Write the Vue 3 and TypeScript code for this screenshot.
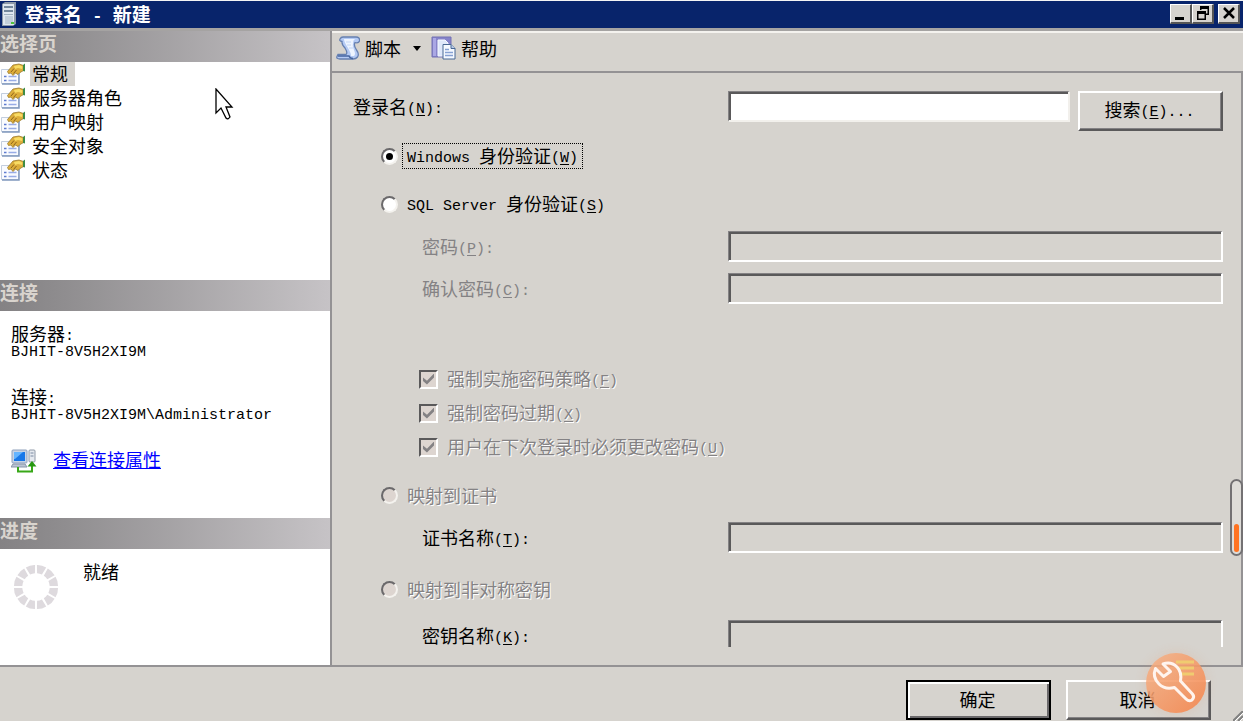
<script setup lang="ts">
import { ref } from 'vue'

interface Policy {
  id: string
  text: string
  key: string
}

const pages: string[] = ['常规', '服务器角色', '用户映射', '安全对象', '状态']
const activePage = ref<number>(0)
const auth = ref<string>('windows')
const loginName = ref<string>('')

const policies: Policy[] = [
  { id: 'policy', text: '强制实施密码策略', key: 'F' },
  { id: 'expire', text: '强制密码过期', key: 'X' },
  { id: 'change', text: '用户在下次登录时必须更改密码', key: 'U' },
]

const spinnerAngles: number[] = Array.from({ length: 12 }, (_, i) => i * 30 + 15)
</script>

<template>
  <div class="window">
    <header class="titlebar">
      <svg class="title-icon" viewBox="0 0 16 24" aria-hidden="true">
        <path d="M1 2 L4 0 H15 V22 L12 24 H1 Z" fill="#8d99a8" />
        <rect x="2" y="2" width="11" height="21" fill="#dfe7ef" />
        <rect x="3" y="4" width="9" height="2" fill="#73879c" />
        <rect x="3" y="8" width="9" height="2" fill="#73879c" />
        <rect x="3" y="12" width="9" height="1" fill="#9fb0c0" />
        <rect x="4" y="14" width="8" height="8" fill="#c2ceda" />
        <rect x="10" y="20" width="3" height="2" fill="#4fc43a" />
      </svg>
      <h1>登录名<span class="lat"> - </span>新建</h1>
      <div class="window-buttons">
        <button type="button" aria-label="最小化">
          <svg viewBox="0 0 16 16"><rect x="2" y="12" width="9" height="3" /></svg>
        </button>
        <button type="button" aria-label="还原">
          <svg viewBox="0 0 16 16">
            <path d="M5 1H14V10H11V8.500H12.500V4H6.500V5H5Z" />
            <path d="M2 6H11V15H2ZM3.500 9V13.500H9.500V9Z" fill-rule="evenodd" />
          </svg>
        </button>
        <button type="button" class="close" aria-label="关闭">
          <svg viewBox="0 0 16 16"><path d="M3 3L13 13M13 3L3 13" stroke="#000" stroke-width="2.500" /></svg>
        </button>
      </div>
    </header>

    <div class="main">
      <aside class="sidebar">
        <section class="pages">
          <h2>选择页</h2>
          <ul>
            <li v-for="(page, i) in pages" :key="page">
              <button type="button" :class="{ active: i === activePage }" @click="activePage = i">
                <svg class="page-icon" viewBox="0 0 24 22" aria-hidden="true">
                  <path d="M0.500 6.500H17.500V20.500H0.500Z" fill="#f9fbff" stroke="#c3cede" />
                  <path d="M18 9V21H1" fill="none" stroke="#8098bd" stroke-width="1.500" />
                  <path d="M3 13.500H5.500M3 17.500H5.500" stroke="#5f7cd0" stroke-width="1.600" />
                  <path d="M7.500 13.500H15.500M7.500 17.500H15.500" stroke="#98ace6" stroke-width="1.600" />
                  <path d="M6.500 8.500L12 2L18 1L22.500 2.500V7.500L19 9.500L17 11.500L14.500 10L12 12.500L10 10L7.500 10.500Z" fill="#ddae3a" stroke="#9b7b2c" stroke-width="0.800" />
                  <path d="M13 3L18 2L21.500 3.500L21 6L17 5L14 6Z" fill="#f8dc64" />
                  <path d="M10 9L13 5.500M12.500 10.500L15.500 7" stroke="#8f641c" />
                  <path d="M22 2L24 0.500V8.500L22 8Z" fill="#3f8c46" />
                </svg>
                <span>{{ page }}</span>
              </button>
            </li>
          </ul>
        </section>

        <section class="connection">
          <h2>连接</h2>
          <div class="connection-body">
            <dl>
              <dt>服务器<span class="lat">:</span></dt>
              <dd class="lat">BJHIT-8V5H2XI9M</dd>
              <dt>连接<span class="lat">:</span></dt>
              <dd class="lat">BJHIT-8V5H2XI9M\Administrator</dd>
            </dl>
            <div class="link-row">
              <svg viewBox="0 0 26 24" aria-hidden="true">
                <rect x="1" y="1" width="15" height="13" rx="1" fill="#c7d2e4" stroke="#8fa0bb" />
                <rect x="3" y="3" width="11" height="9" fill="#1877e8" />
                <path d="M3 3H12L4 10H3Z" fill="#64b4ff" />
                <path d="M2 15H14L16 18H0Z" fill="#bcc5d3" stroke="#8895aa" />
                <rect x="18" y="1" width="6" height="12" rx="1" fill="#e5e9ef" stroke="#909aa8" />
                <path d="M19.500 4H22.500M19.500 7H22.500" stroke="#7888a0" />
                <path d="M7 18V22.500H21V17" fill="none" stroke="#38a818" stroke-width="2" />
                <path d="M16.500 17.500L21 12L25.500 17.500Z" fill="#279812" />
              </svg>
              <a href="#">查看连接属性</a>
            </div>
          </div>
        </section>

        <section class="progress">
          <h2>进度</h2>
          <div class="progress-body">
            <svg viewBox="0 0 46 46" aria-hidden="true">
              <path
                v-for="a in spinnerAngles"
                :key="a"
                d="M18.200 1.500Q23 0 27.800 1.500L25.500 9.500Q23 9 20.500 9.500Z"
                fill="#dedade"
                :transform="`rotate(${a} 23 23)`"
              />
            </svg>
            <span>就绪</span>
          </div>
        </section>
      </aside>

      <div class="content">
        <nav class="toolbar">
          <button type="button">
            <svg class="script-icon" viewBox="0 0 24 24" aria-hidden="true">
              <path d="M7 1H20Q24 1 23.500 5Q22.500 7.500 19 6.500L18.500 8Q18 10 20.500 14Q23.500 18 21.500 21Q20 23 17 23H4Q0 23 1 20.500L2 18.500H10Q12 17 9 12Q5.500 8 6 5.500Q3 5 4 3Q5 1 7 1Z" fill="#b4caf4" stroke="#6680b0" stroke-width="1.300" />
              <path d="M8 3H19Q17 4 17 7Q16 10 18 14Q20 18 18 20H15Q15 17 12 12Q8 6 8 3Z" fill="#edf4ff" />
              <path d="M2 20H13Q14 22.500 17 22.500" fill="none" stroke="#4565a0" stroke-width="1.500" />
              <path d="M10 6H15M11 9H15M13 12H17" stroke="#c4d6f4" />
            </svg>
            <span>脚本</span>
            <svg class="arrow" viewBox="0 0 8 5" aria-hidden="true"><path d="M0 0H8L4 5Z" /></svg>
          </button>
          <button type="button">
            <svg class="help-icon" viewBox="0 0 25 24" aria-hidden="true">
              <path d="M1 1H20V21H1Z" fill="#8684ca" stroke="#7270b4" />
              <path d="M2 2H5V20H2Z" fill="#aaa7e4" />
              <path d="M7 4H14L17 7V20H7Z" fill="#dfe8fa" stroke="#f6f9ff" />
              <path d="M12 8.500H20L24 12.500V23H12Z" fill="#f5f9ff" stroke="#496894" />
              <path d="M20 8.500V12.500H24" fill="#b9cae8" stroke="#496894" />
              <path d="M14 13.500H18M14 16.500H22M14 19.500H22" stroke="#86a1d2" stroke-width="1.500" />
            </svg>
            <span>帮助</span>
          </button>
        </nav>

        <form class="form" @submit.prevent>
          <div class="fields">
            <div class="row login">
              <label for="login">登录名<span class="lat">(<u>N</u>):</span></label>
              <div class="login-controls">
                <input id="login" v-model="loginName" type="text" class="box" />
                <button type="button" class="btn">搜索<span class="lat">(<u>E</u>)...</span></button>
              </div>
            </div>

            <label class="option windows">
              <input v-model="auth" type="radio" name="auth" value="windows" />
              <span class="focus"><span class="lat">Windows </span>身份验证<span class="lat">(<u>W</u>)</span></span>
            </label>
            <label class="option sql">
              <input v-model="auth" type="radio" name="auth" value="sql" />
              <span><span class="lat">SQL Server </span>身份验证<span class="lat">(<u>S</u>)</span></span>
            </label>

            <div class="row sub password muted">
              <label for="pwd">密码<span class="lat">(<u>P</u>):</span></label>
              <input id="pwd" type="password" class="box" disabled />
            </div>
            <div class="row sub confirm muted">
              <label for="pwd2">确认密码<span class="lat">(<u>C</u>):</span></label>
              <input id="pwd2" type="password" class="box" disabled />
            </div>

            <div class="policies">
              <label v-for="p in policies" :key="p.id" class="option etched">
                <input type="checkbox" checked disabled />
                <span>{{ p.text }}<span class="lat">(<u>{{ p.key }}</u>)</span></span>
              </label>
            </div>

            <label class="option etched cert">
              <input type="radio" name="auth" value="cert" disabled />
              <span>映射到证书</span>
            </label>
            <div class="row sub cert-name">
              <label for="cert">证书名称<span class="lat">(<u>T</u>):</span></label>
              <input id="cert" type="text" class="box" disabled />
            </div>
            <label class="option etched asym">
              <input type="radio" name="auth" value="key" disabled />
              <span>映射到非对称密钥</span>
            </label>
            <div class="row sub key-name">
              <label for="key">密钥名称<span class="lat">(<u>K</u>):</span></label>
              <input id="key" type="text" class="box" disabled />
            </div>
          </div>
        </form>
      </div>
    </div>

    <footer class="footer">
      <button type="button" class="btn default">确定</button>
      <button type="button" class="btn">取消</button>
      <svg class="grip" viewBox="0 0 10 10" aria-hidden="true">
        <path d="M0 10L10 0M5 10L10 5" stroke="#808080" stroke-width="2" />
        <path d="M2 10L10 2M7 10L10 7" stroke="#fff" />
      </svg>
    </footer>

    <div class="level" aria-hidden="true"><span></span></div>

    <button type="button" class="tool-badge" aria-label="工具">
      <svg viewBox="0 0 60 60" aria-hidden="true">
        <path d="M30 9H48M32 15H48M34 21H48" stroke="#f0cb70" stroke-width="3" />
        <path
          d="M17 11Q25 8 31 14Q36 19 34.500 28L46.500 41Q49 44 46 47Q43 49 40 46L28.500 34.500Q19 37 13 31Q6 24 9.500 15.500L17.500 23.500L24.500 18.500Z"
          fill="none"
          stroke="#fff4ee"
          stroke-width="3"
          stroke-linejoin="round"
        />
      </svg>
    </button>

    <svg class="pointer" viewBox="0 0 19 32" aria-hidden="true">
      <path d="M1 1V25L6 20L11 30Q13 32 15 29L11 19H17Z" fill="#fff" stroke="#000" stroke-width="1.300" />
    </svg>
  </div>
</template>

<style>
body {
  margin: 0;
  background: #d6d3ce;
}
</style>

<style scoped>
* {
  box-sizing: border-box;
}

.window {
  position: relative;
  display: flex;
  flex-direction: column;
  height: 100vh;
  overflow: hidden;
  border-top: 1px solid #f4f4f4;
  background: #d6d3ce;
  color: #000;
  font: 18px/24px "Noto Sans CJK SC", sans-serif;
}

button,
input {
  margin: 0;
  padding: 0;
  border: 0;
  border-radius: 0;
  background: none;
  color: inherit;
  font: inherit;
}

svg {
  flex: none;
}

.lat {
  font-family: "Liberation Mono", monospace;
  font-size: 15px;
  line-height: 18px;
  vertical-align: 1px;
  white-space: pre;
}

u {
  text-underline-offset: 2px;
}

.titlebar {
  display: flex;
  flex: none;
  align-items: center;
  height: 30px;
  padding: 0 3px 2px 1px;
  border-bottom: 3px solid #a5a3a2;
  background: #08246b;
  color: #fff;
}

.title-icon {
  width: 16px;
  height: 24px;
}

.titlebar h1 {
  flex: 1;
  margin: 0 0 0 8px;
  font-size: 19px;
  line-height: 24px;
}

.titlebar .lat {
  font-size: 17px;
}

.window-buttons {
  display: flex;
}

.window-buttons button {
  width: 22px;
  height: 20px;
  border: solid;
  border-width: 1px 2px 2px 1px;
  border-color: #fff #555 #555 #fff;
  background: #d6d3ce;
}

.window-buttons svg {
  display: block;
  width: 16px;
  height: 16px;
  margin: 0 auto;
}

.window-buttons .close {
  margin-left: 4px;
}

.main {
  display: flex;
  flex: 1;
  min-height: 0;
  border-bottom: 2px solid #949294;
}

.sidebar {
  display: flex;
  flex: none;
  flex-direction: column;
  width: 332px;
  border-right: 2px solid #949294;
  background: #fff;
}

.sidebar h2 {
  height: 31px;
  margin: 0;
  background: linear-gradient(90deg, #848284 0%, #8d8b8d 16%, #c6c3c6 100%);
  color: #d9d4ce;
  font-size: 19px;
  line-height: 24px;
}

.pages {
  flex: none;
  height: 249px;
}

.pages ul {
  margin: 0;
  padding: 0;
  list-style: none;
}

.pages li button {
  display: flex;
  align-items: center;
  height: 24px;
  padding-left: 1px;
}

.page-icon {
  width: 24px;
  height: 22px;
  margin-right: 5px;
}

.pages li span {
  padding: 0 7px 2px 2px;
  line-height: 22px;
}

.pages .active span {
  background: #d6d3ce;
}

.connection {
  flex: none;
  height: 238px;
}

.connection-body {
  padding: 13px 11px;
}

dl,
dd {
  margin: 0;
}

dt {
  height: 18px;
  line-height: 18px;
}

dd.lat {
  height: 22px;
  line-height: 22px;
}

dd + dt {
  margin-top: 23px;
}

.link-row {
  display: flex;
  gap: 16px;
  margin-top: 20px;
}

.link-row svg {
  width: 26px;
  height: 24px;
  margin-top: 2px;
}

.link-row a {
  color: #00f;
}

.progress-body {
  display: flex;
  gap: 24px;
  padding: 10px 13px;
}

.progress-body svg {
  width: 46px;
  height: 46px;
  margin-top: 5px;
}

.content {
  display: flex;
  flex: 1;
  flex-direction: column;
  min-width: 0;
}

.toolbar {
  display: flex;
  flex: none;
  gap: 10px;
  height: 42px;
  padding: 0 4px 8px;
  border-top: 2px solid #f4f2ee;
  border-bottom: 2px solid #949294;
}

.toolbar button {
  display: flex;
  align-items: center;
  gap: 5px;
}

.script-icon {
  width: 24px;
  height: 24px;
}

.help-icon {
  width: 25px;
  height: 24px;
}

.arrow {
  width: 8px;
  height: 5px;
  margin-left: 7px;
}

.form {
  flex: 1;
  min-height: 0;
  padding: 0 18px 18px 21px;
  border-right: 2px solid #949294;
}

.fields {
  display: flex;
  flex-direction: column;
  height: 100%;
  padding-top: 18px;
  overflow: hidden;
}

.fields > * {
  flex: none;
}

.row {
  display: grid;
  grid-template-columns: 375px 1fr;
}

.row > label {
  line-height: 30px;
}

.sub > label {
  padding-left: 69px;
}

.login-controls {
  display: flex;
  align-items: flex-start;
  gap: 8px;
}

.box {
  width: 100%;
  height: 31px;
  border: solid;
  border-width: 1px 2px 2px 1px;
  border-color: #848284 #fff #fff #848284;
  box-shadow: inset 2px 2px 0 #5a595a;
  outline: 0;
}

#login {
  flex: 1;
  min-width: 0;
  padding: 0 6px;
  background: #fff;
  border-color: #848284 #f2f0ec #f2f0ec #848284;
}

.btn {
  flex: none;
  width: 145px;
  height: 40px;
  padding: 0 2px 3px 0;
  border: 2px solid;
  border-color: #fff #5a595a #5a595a #fff;
  background: #d6d3ce;
  box-shadow: inset -1px -1px 0 #848284;
}

.option {
  display: flex;
  align-items: center;
  height: 24px;
  padding-left: 28px;
}

.option > input {
  display: grid;
  flex: none;
  place-items: center;
  width: 17px;
  height: 17px;
  margin-right: 4px;
  border: 2px solid;
  border-color: #6b696b #f4f2ee #f4f2ee #6b696b;
  border-radius: 50%;
  background: #fff;
  appearance: none;
}

.option > span {
  padding: 0 4px;
  border: 1px solid transparent;
  line-height: 22px;
}

.option > .focus {
  border: 1px dotted #000;
}

.option > input:checked::after {
  width: 7px;
  height: 7px;
  border-radius: 50%;
  background: #000;
  content: "";
}

.option > input:disabled {
  background: #ddd5d0;
}

.policies {
  display: grid;
  gap: 10px;
  margin-top: 63px;
}

.policies .option {
  padding-left: 66px;
}

.policies .option > input {
  width: 19px;
  height: 19px;
  border-color: #5a595a #fff #fff #5a595a;
  border-radius: 0;
}

.policies .option > input:checked::after {
  width: 11px;
  height: 11px;
  border-radius: 0;
  background: #848284;
  clip-path: polygon(0 36%, 36% 66%, 100% 0, 100% 36%, 36% 100%, 0 68%);
}

.muted {
  color: #848284;
}

.etched {
  color: #848284;
  text-shadow: 1px 1px 0 #fff;
}

.windows {
  margin-top: 13px;
}

.sql {
  margin-top: 24px;
}

.password {
  margin-top: 15px;
}

.confirm {
  margin-top: 11px;
}

.cert {
  margin-top: 24px;
}

.cert-name {
  margin-top: 15px;
}

.asym {
  margin-top: 24px;
}

.key-name {
  margin-top: 19px;
}

.footer {
  position: relative;
  display: flex;
  flex: none;
  justify-content: flex-end;
  gap: 15px;
  height: 54px;
  padding: 13px 32px 0 0;
}

.btn.default {
  border-color: #000;
  box-shadow: inset 2px 2px 0 #fff, inset -2px -2px 0 #6b696b;
}

.grip {
  position: absolute;
  right: 0;
  bottom: 0;
  width: 10px;
  height: 10px;
}

.level {
  position: absolute;
  right: 0;
  bottom: 165px;
  display: flex;
  align-items: flex-end;
  width: 13px;
  height: 77px;
  padding: 2px;
  border: 2px solid #737173;
  border-radius: 7px;
  background: #dedcd8;
}

.level span {
  width: 100%;
  height: 28px;
  border-radius: 3px;
  background: #ff7321;
}

.tool-badge {
  position: absolute;
  right: 37px;
  bottom: 8px;
  width: 60px;
  height: 60px;
  border-radius: 50%;
  background: linear-gradient(135deg, rgba(246, 178, 134, 0.84), rgba(244, 134, 78, 0.92));
  box-shadow: 0 0 12px rgba(240, 150, 100, 0.2);
}

.tool-badge svg {
  display: block;
  width: 60px;
  height: 60px;
}

.pointer {
  position: absolute;
  top: 87px;
  left: 215px;
  width: 19px;
  height: 32px;
  pointer-events: none;
}
</style>
